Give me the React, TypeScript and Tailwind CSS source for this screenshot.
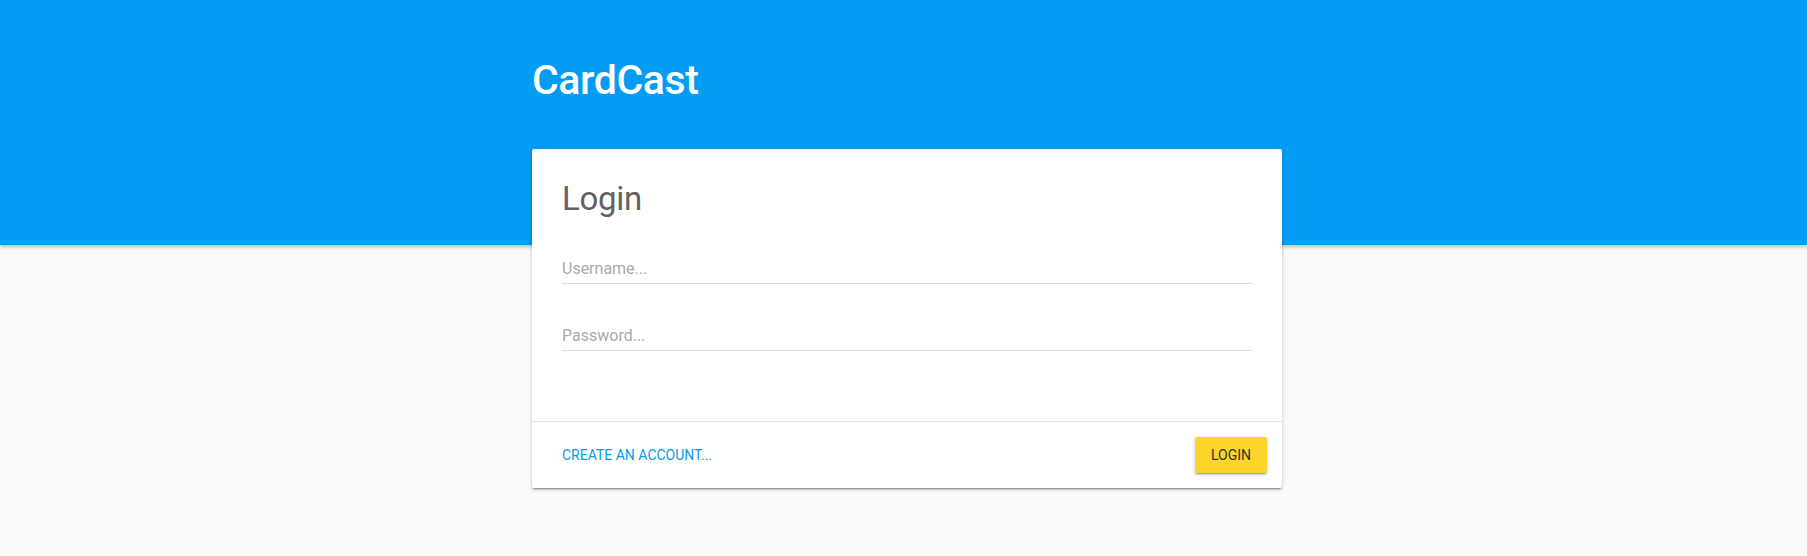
import { useState } from 'react';

export default function App() {
  const [username, setUsername] = useState('');
  const [password, setPassword] = useState('');

  return (
    <div className="min-h-[556px] w-full bg-[#fafafa] font-['Roboto',_'Liberation_Sans',_sans-serif]">
      {/* Blue header bar */}
      <header className="h-[245px] w-full bg-[#039cf4] shadow-[0_2px_4px_rgba(0,0,0,0.25)]">
        <div className="ml-[532px] pt-[56px]">
          <h1 className="text-[41px] leading-[48px] font-medium text-white tracking-[-0.4px]">CardCast</h1>
        </div>
      </header>

      {/* Login card, pulled up over the header */}
      <div className="ml-[532px] -mt-[96px] w-[750px] relative">
        <div className="bg-white rounded-[2px] shadow-[0_2px_2px_rgba(0,0,0,0.16),0_3px_1px_-2px_rgba(0,0,0,0.22),0_1px_5px_rgba(0,0,0,0.14)]">
          <div className="px-[30px] pt-[30px] pb-[70px]">
            <h2 className="text-[33px] leading-[40px] font-normal text-[#616161] tracking-[-0.3px]">Login</h2>

            <div className="mt-[36px] border-b border-[#dcdcdc]">
              <input
                type="text"
                placeholder="Username..."
                value={username}
                onChange={(e) => setUsername(e.target.value)}
                className="w-full py-[4px] text-[16px] leading-[20px] text-[#424242] placeholder-[#aaaaaa] outline-none bg-transparent"
              />
            </div>

            <div className="mt-[38px] border-b border-[#dcdcdc]">
              <input
                type="password"
                placeholder="Password..."
                value={password}
                onChange={(e) => setPassword(e.target.value)}
                className="w-full py-[4px] text-[16px] leading-[20px] text-[#424242] placeholder-[#aaaaaa] outline-none bg-transparent"
              />
            </div>
          </div>

          {/* Actions */}
          <div className="border-t border-[#e0e0e0] h-[67px] pl-[30px] pr-[15px] flex items-center justify-between">
            <a href="#" className="text-[14px] leading-[16px] uppercase text-[#039be5]">
              Create an account...
            </a>
            <button
              type="button"
              className="h-9 px-4 rounded-[2px] bg-[#fdd42a] text-[14px] uppercase text-[#333333] shadow-[0_2px_2px_rgba(0,0,0,0.14),0_3px_1px_-2px_rgba(0,0,0,0.2),0_1px_5px_rgba(0,0,0,0.12)]"
            >
              Login
            </button>
          </div>
        </div>
      </div>
    </div>
  );
}
